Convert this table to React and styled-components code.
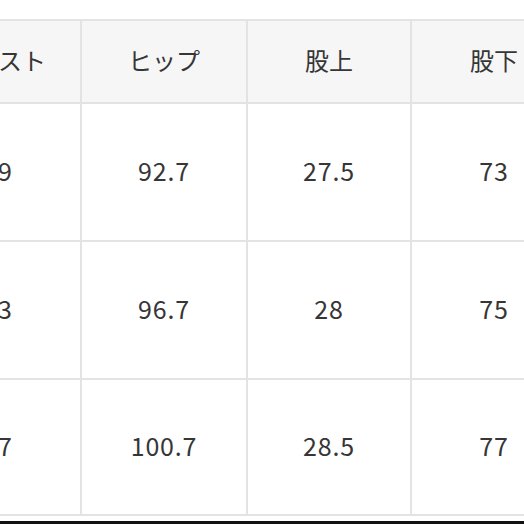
import React from "react";
import styled, { createGlobalStyle } from "styled-components";

const Global = createGlobalStyle`
  html, body { margin: 0; padding: 0; background: #fff; overflow: hidden; }
  body { font-family: "Noto Sans CJK JP", "Noto Sans", sans-serif; }
`;

const Page = styled.div`
  width: 524px;
  height: 524px;
  overflow: hidden;
  display: flex;
  flex-direction: column;
  padding-top: 19px;
  box-sizing: border-box;
`;

const Table = styled.div`
  display: grid;
  grid-template-columns: 164px 164px 162px 164px;
  grid-template-rows: 81px 136px 136px 134px;
  gap: 2px;
  padding: 2px 0;
  background: #e3e3e3;
  margin-left: -84px;
  width: max-content;
`;

const Cell = styled.div`
  display: flex;
  align-items: center;
  justify-content: center;
  padding-bottom: 5px;
  box-sizing: border-box;
  background: ${(p) => (p.$head ? "#f6f6f6" : "#ffffff")};
  color: #363636;
  font-size: ${(p) => (p.$head ? "24px" : "25px")};
  letter-spacing: ${(p) => (p.$head ? "0" : "0.8px")};
  font-weight: 400;
  white-space: nowrap;
`;

const Spacer = styled.div`
  height: 5px;
`;

const Rule = styled.div`
  height: 3px;
  background: #111;
`;

const head = ["ウエスト", "ヒップ", "股上", "股下"];
const rows = [
  ["69", "92.7", "27.5", "73"],
  ["73", "96.7", "28", "75"],
  ["77", "100.7", "28.5", "77"],
];

export default function App() {
  return (
    <>
      <Global />
      <Page>
        <Table>
          {head.map((h) => (
            <Cell $head key={h}>{h}</Cell>
          ))}
          {rows.map((r, i) =>
            r.map((v, j) => <Cell key={i + "-" + j}>{v}</Cell>)
          )}
        </Table>
        <Spacer />
        <Rule />
      </Page>
    </>
  );
}
